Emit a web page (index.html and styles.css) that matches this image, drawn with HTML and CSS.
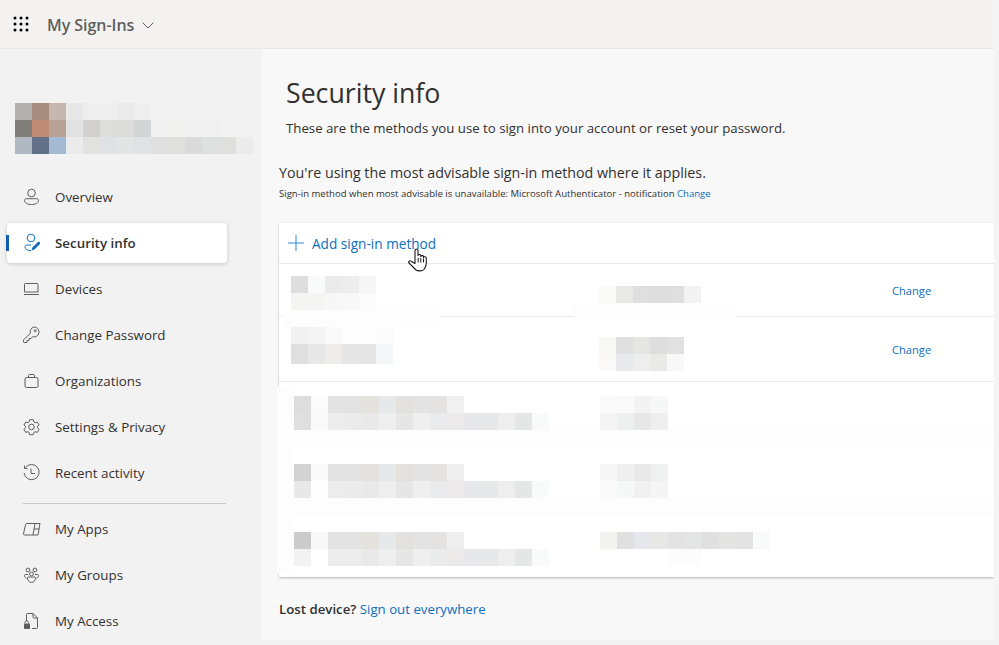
FILE: index.html
```html
<!DOCTYPE html>
<html lang="en">
<head>
<meta charset="utf-8">
<title>Security info</title>
<link rel="stylesheet" href="styles.css">
</head>
<body>
<div class="app">
  <header class="topbar">
    <svg class="waffle" width="16" height="16" viewBox="0 0 16 16"><g fill="#000"><circle cx="2" cy="2" r="1.500"/><circle cx="8" cy="2" r="1.500"/><circle cx="14" cy="2" r="1.500"/><circle cx="2" cy="8" r="1.500"/><circle cx="8" cy="8" r="1.500"/><circle cx="14" cy="8" r="1.500"/><circle cx="2" cy="14" r="1.500"/><circle cx="8" cy="14" r="1.500"/><circle cx="14" cy="14" r="1.500"/></g></svg>
    <span class="brand">My Sign-Ins</span>
    <svg class="chev" width="12" height="7" viewBox="0 0 12 7"><path d="M.5.5 6 6 11.500.5" fill="none" stroke="#605e5c"/></svg>
  </header>
  <div class="body">
    <nav class="side">
      <svg class="avatar" width="238" height="51" viewBox="0 0 238 51">
        <g id="a1">
          <rect x="0" y="0" width="17" height="17" fill="#b3b1ae"/><rect x="17" y="0" width="17" height="17" fill="#a58c7f"/><rect x="34" y="0" width="17" height="17" fill="#c6b7af"/><rect x="51" y="0" width="17" height="17" fill="#e8e8e8"/><rect x="68" y="0" width="17" height="17" fill="#eeeeee"/><rect x="85" y="0" width="17" height="17" fill="#efefef"/><rect x="102" y="0" width="17" height="17" fill="#ebebeb"/><rect x="119" y="0" width="17" height="17" fill="#eeeeee"/>
          <rect x="0" y="17" width="17" height="17" fill="#817d79"/><rect x="17" y="17" width="17" height="17" fill="#c18c75"/><rect x="34" y="17" width="17" height="17" fill="#b8a298"/><rect x="51" y="17" width="17" height="17" fill="#e2e2e2"/><rect x="68" y="17" width="17" height="17" fill="#d2d1cf"/><rect x="85" y="17" width="17" height="17" fill="#dddddc"/><rect x="102" y="17" width="17" height="17" fill="#dcdcda"/><rect x="119" y="17" width="17" height="17" fill="#d3d4d6"/><rect x="136" y="17" width="17" height="17" fill="#f1f1f1"/><rect x="153" y="17" width="17" height="17" fill="#f0f0ef"/><rect x="170" y="17" width="17" height="17" fill="#f1f1f1"/><rect x="187" y="17" width="17" height="17" fill="#f0f0f0"/>
          <rect x="0" y="34" width="17" height="17" fill="#b0b8c1"/><rect x="17" y="34" width="17" height="17" fill="#627188"/><rect x="34" y="34" width="17" height="17" fill="#a4b9d2"/><rect x="51" y="34" width="17" height="17" fill="#eaebea"/><rect x="68" y="34" width="17" height="17" fill="#e1e2e0"/><rect x="85" y="34" width="17" height="17" fill="#dfe1e4"/><rect x="102" y="34" width="17" height="17" fill="#e3e4e6"/><rect x="119" y="34" width="17" height="17" fill="#e0e2e5"/><rect x="136" y="34" width="17" height="17" fill="#dfdfdf"/><rect x="153" y="34" width="17" height="17" fill="#dfdfde"/><rect x="170" y="34" width="17" height="17" fill="#dadada"/><rect x="187" y="34" width="17" height="17" fill="#dfe1e0"/><rect x="204" y="34" width="17" height="17" fill="#dfdfdd"/><rect x="221" y="34" width="17" height="17" fill="#ebebeb"/>
        </g>
      </svg>
      <ul class="menu">
        <li class="item"><svg class="ico" width="20" height="20" viewBox="0 0 20 20"><g fill="none" stroke="#605e5c"><circle cx="10.500" cy="6" r="3.800"/><path d="M3.500 13.500c0-1 .8-1.800 1.800-1.800h10.400c1 0 1.800.8 1.800 1.800 0 2.600-3.300 4-7 4s-7-1.400-7-4Z"/></g></svg>Overview</li>
        <li class="item active"><svg class="ico" width="20" height="20" viewBox="0 0 20 20"><g fill="none" stroke="#0f6cbd"><circle cx="10" cy="5" r="3.800"/><path d="M10 17.500c-2.800 0-6-1-6-3.600 0-1 .8-1.900 1.800-1.900H10"/></g><path d="M10.500 17.500l.9-3 5.300-5.300c.6-.6 1.500-.5 2 0s.6 1.400 0 2l-5.300 5.300Z" fill="#0f6cbd"/></svg>Security info</li>
        <li class="item"><svg class="ico" width="20" height="20" viewBox="0 0 20 20"><g fill="none" stroke="#605e5c"><path d="M4.500 4.500h11.500a1 1 0 0 1 1 1v7.500H3.500V5.500a1 1 0 0 1 1-1Z"/><path d="M3 15.500h15"/></g></svg>Devices</li>
        <li class="item"><svg class="ico" width="20" height="20" viewBox="0 0 20 20"><g fill="none" stroke="#605e5c"><path d="M13 2c2.800 0 5 2.200 5 5s-2.200 5-5 5c-.6 0-1.100-.1-1.500-.3l-1.500 1.800H8v2H6v2H3.200a.7.7 0 0 1-.7-.7v-2l6.900-6.400A5 5 0 0 1 13 2Z"/><circle cx="14.200" cy="5.800" r="1"/></g></svg>Change Password</li>
        <li class="item"><svg class="ico" width="20" height="20" viewBox="0 0 20 20"><g fill="none" stroke="#605e5c"><rect x="4" y="6.500" width="13" height="10" rx="1.500"/><path d="M7.500 6.500V4.500a1 1 0 0 1 1-1h4a1 1 0 0 1 1 1v2"/></g></svg>Organizations</li>
        <li class="item"><svg class="ico" width="20" height="20" viewBox="0 0 20 20"><g fill="none" stroke="#605e5c"><circle cx="10.500" cy="10" r="2.800"/><path d="M8.700 2.700h3.600l.5 2.200 1.300.8 2.200-.7 1.800 3-1.700 1.500v1.400l1.700 1.500-1.800 3-2.200-.7-1.300.8-.5 2.200H8.700l-.5-2.200-1.300-.8-2.200.7-1.800-3 1.700-1.500v-1.400L2.900 8l1.800-3 2.200.7 1.300-.8Z" stroke-linejoin="round"/></g></svg>Settings &amp; Privacy</li>
        <li class="item"><svg class="ico" width="20" height="20" viewBox="0 0 20 20"><g fill="none" stroke="#605e5c"><path d="M4.500 4.500A7.600 7.600 0 1 1 3 10"/><path d="M3.500 2.500v3h3"/><path d="M10 5.500V10.500h4"/></g></svg>Recent activity</li>
      </ul>
      <hr class="rule">
      <ul class="menu">
        <li class="item"><svg class="ico" width="20" height="20" viewBox="0 0 20 20"><g fill="none" stroke="#605e5c"><path d="M6 4.500h13l-2 11.500H3.500a1 1 0 0 1-1-1.200L4.500 5.700A1.500 1.500 0 0 1 6 4.500Z"/><path d="M14 4.500 12 16M13.300 10h5"/></g></svg>My Apps</li>
        <li class="item"><svg class="ico" width="20" height="20" viewBox="0 0 20 20"><g fill="none" stroke="#605e5c"><circle cx="7" cy="5" r="1.900"/><circle cx="14" cy="5" r="1.900"/><circle cx="10.500" cy="9" r="1.900"/><path d="M6.500 13c0-.6.400-1 1-1h6c.6 0 1 .4 1 1 0 2.500-1.800 4.500-4 4.500s-4-2-4-4.500Z"/><path d="M7 9.500H4.500c-.6 0-1 .4-1 1 0 1.300.7 2.300 2 2.800M14 9.500h2.500c.6 0 1 .4 1 1 0 1.300-.7 2.300-2 2.800"/></g></svg>My Groups</li>
        <li class="item"><svg class="ico" width="20" height="20" viewBox="0 0 20 20"><g fill="none" stroke="#605e5c"><path d="M5.500 10V3.500a1 1 0 0 1 1-1h5.500l4.500 4.500v9.500a1 1 0 0 1-1 1H11"/><path d="M12 2.500V6a1 1 0 0 0 1 1h3.500"/><path d="M4 12.500v-1a1.700 1.700 0 0 1 3.400 0v1"/></g><rect x="3" y="12.500" width="6" height="5.500" rx=".7" fill="#605e5c"/></svg>My Access</li>
      </ul>
    </nav>
    <main class="main">
      <h1 class="title">Security info</h1>
      <p class="lead">These are the methods you use to sign into your account or reset your password.</p>
      <p class="advice">You're using the most advisable sign-in method where it applies.</p>
      <p class="note">Sign-in method when most advisable is unavailable: Microsoft Authenticator - notification <a class="link" href="#">Change</a></p>
      <section class="card">
        <div class="add">
          <svg class="plus" width="16" height="16" viewBox="0 0 16 16"><path d="M8 0v16M0 8h16" stroke="#2b88d8" fill="none"/></svg>
          <a class="link addlink" href="#">Add sign-in method</a>
          <svg class="hand" width="20" height="25" viewBox="0 0 20 25"><path d="M7 2.500c0-2 3-2 3 0V7.500c0-1.300 2.800-1.300 2.800 0v1c0-1.200 2.700-1.200 2.700 0v1c0-1.200 2.800-1 2.800.5v5c0 3.500-1.300 4.500-2.300 6.500-1 1.500-6 2-8 .5L1 15c-1.200-1.500.8-3 2.200-1.800L7 15.500Z" fill="#fff" stroke="#1a1a1a" stroke-width="1.100" stroke-linejoin="round"/><path d="M10.200 10v4.500M12.800 10v4.500M15.500 10.500v4" stroke="#1a1a1a"/></svg>
        </div>
        <div class="row row-a">
          <svg class="blur b-name" width="157" height="88" viewBox="0 0 157 88">
            <rect x="9" y="0" width="17" height="17" fill="#dedede"/><rect x="26" y="0" width="17" height="17" fill="#f9fafa"/><rect x="43" y="0" width="17" height="17" fill="#ebebeb"/><rect x="60" y="0" width="17" height="17" fill="#ededed"/><rect x="77" y="0" width="17" height="17" fill="#f6f6f6"/>
            <rect x="9" y="17" width="17" height="17" fill="#f4f4f3"/><rect x="26" y="17" width="17" height="17" fill="#f5f5f4"/><rect x="43" y="17" width="17" height="17" fill="#f7f7f7"/><rect x="60" y="17" width="17" height="17" fill="#f8f8f8"/><rect x="77" y="17" width="17" height="17" fill="#fbfbfb"/>
            <rect x="0" y="34" width="157" height="17" fill="#fdfdfd"/>
            <rect x="9" y="51" width="17" height="17" fill="#f1f1f1"/><rect x="26" y="51" width="17" height="17" fill="#f4f4f4"/><rect x="43" y="51" width="17" height="17" fill="#fafafa"/><rect x="60" y="51" width="17" height="17" fill="#fdfdfd"/><rect x="77" y="51" width="17" height="17" fill="#fdfdfd"/><rect x="94" y="51" width="17" height="17" fill="#fbfbfb"/>
            <rect x="9" y="68" width="17" height="20" fill="#dfdfdf"/><rect x="26" y="68" width="17" height="20" fill="#e8e8e8"/><rect x="43" y="68" width="17" height="20" fill="#eeedeb"/><rect x="60" y="68" width="17" height="20" fill="#e6e6e6"/><rect x="77" y="68" width="17" height="20" fill="#e5e5e5"/><rect x="94" y="68" width="17" height="20" fill="#f5f6f8"/>
          </svg>
          <svg class="blur b-val" width="164" height="34" viewBox="0 0 164 34">
            <rect x="26" y="0" width="17" height="17" fill="#f9f9f8"/><rect x="43" y="0" width="17" height="17" fill="#e9e9e8"/><rect x="60" y="0" width="17" height="17" fill="#dfdfdf"/><rect x="77" y="0" width="17" height="17" fill="#dedede"/><rect x="94" y="0" width="17" height="17" fill="#dfdfdf"/><rect x="111" y="0" width="17" height="17" fill="#f3f3f3"/>
            <rect x="0" y="17" width="164" height="17" fill="#fdfdfd"/>
          </svg>
          <a class="link change" href="#">Change</a>
        </div>
        <div class="row row-b">
          <svg class="blur b-val2" width="85" height="34" viewBox="0 0 85 34">
            <rect x="0" y="0" width="17" height="17" fill="#f8f8f7"/><rect x="17" y="0" width="17" height="17" fill="#e0e0e0"/><rect x="34" y="0" width="17" height="17" fill="#e5e5e4"/><rect x="51" y="0" width="17" height="17" fill="#dedede"/><rect x="68" y="0" width="17" height="17" fill="#e1e1e1"/>
            <rect x="0" y="17" width="17" height="17" fill="#faf9f8"/><rect x="17" y="17" width="17" height="17" fill="#e7e9ec"/><rect x="34" y="17" width="17" height="17" fill="#eeeeee"/><rect x="51" y="17" width="17" height="17" fill="#e9e9e7"/><rect x="68" y="17" width="17" height="17" fill="#f8f8f8"/>
          </svg>
          <a class="link change" href="#">Change</a>
        </div>
        <div class="rows-low">
          <div class="low">
            <svg class="blur" width="255" height="51" viewBox="0 0 255 51">
              <rect x="-17" y="-9" width="17" height="186" fill="#fdfdfd"/>
              <rect x="0" y="34" width="700" height="17" fill="#fdfdfd"/>
              <rect x="0" y="0" width="17" height="17" fill="#dddddd"/><rect x="17" y="0" width="17" height="17" fill="#fbfbfb"/><rect x="34" y="0" width="17" height="17" fill="#e3e3e3"/><rect x="51" y="0" width="17" height="17" fill="#e3e3e3"/><rect x="68" y="0" width="17" height="17" fill="#e3e2df"/><rect x="85" y="0" width="17" height="17" fill="#e7e8ea"/><rect x="102" y="0" width="17" height="17" fill="#e2e1de"/><rect x="119" y="0" width="17" height="17" fill="#e3e3e3"/><rect x="136" y="0" width="17" height="17" fill="#e4e3e1"/><rect x="153" y="0" width="17" height="17" fill="#f0f0f0"/>
              <rect x="0" y="17" width="17" height="17" fill="#dfdfdf"/><rect x="17" y="17" width="17" height="17" fill="#fafafa"/><rect x="34" y="17" width="17" height="17" fill="#ececec"/><rect x="51" y="17" width="17" height="17" fill="#ebebeb"/><rect x="68" y="17" width="17" height="17" fill="#e9e9e9"/><rect x="85" y="17" width="17" height="17" fill="#eeeeee"/><rect x="102" y="17" width="17" height="17" fill="#e6e6e6"/><rect x="119" y="17" width="17" height="17" fill="#efefef"/><rect x="136" y="17" width="17" height="17" fill="#e8eaec"/><rect x="153" y="17" width="17" height="17" fill="#ebeae8"/><rect x="170" y="17" width="17" height="17" fill="#e6e8eb"/><rect x="187" y="17" width="17" height="17" fill="#e7e8e9"/><rect x="204" y="17" width="17" height="17" fill="#eeeeee"/><rect x="221" y="17" width="17" height="17" fill="#e5e7e6"/><rect x="238" y="17" width="17" height="17" fill="#f9fbfb"/>
            </svg>
            <svg class="blur" width="68" height="34" viewBox="0 0 68 34">
              <rect x="0" y="0" width="17" height="17" fill="#fafafa"/><rect x="17" y="0" width="17" height="17" fill="#f9f9f9"/><rect x="34" y="0" width="17" height="17" fill="#f3f3f3"/><rect x="51" y="0" width="17" height="17" fill="#f6f8f8"/>
              <rect x="0" y="17" width="17" height="17" fill="#f5f5f5"/><rect x="17" y="17" width="17" height="17" fill="#eef0f0"/><rect x="34" y="17" width="17" height="17" fill="#e7e7e7"/><rect x="51" y="17" width="17" height="17" fill="#eeeeee"/>
            </svg>
          </div>
          <div class="low">
            <svg class="blur" width="255" height="51" viewBox="0 0 255 51">
              <rect x="0" y="34" width="700" height="17" fill="#fdfdfd"/>
              <rect x="0" y="0" width="17" height="17" fill="#d3d3d3"/><rect x="17" y="0" width="17" height="17" fill="#fafafa"/><rect x="34" y="0" width="17" height="17" fill="#e3e3e3"/><rect x="51" y="0" width="17" height="17" fill="#e3e3e3"/><rect x="68" y="0" width="17" height="17" fill="#e3e2df"/><rect x="85" y="0" width="17" height="17" fill="#e7e8ea"/><rect x="102" y="0" width="17" height="17" fill="#e2e1de"/><rect x="119" y="0" width="17" height="17" fill="#e3e3e3"/><rect x="136" y="0" width="17" height="17" fill="#e4e3e1"/><rect x="153" y="0" width="17" height="17" fill="#eeeeee"/>
              <rect x="0" y="17" width="17" height="17" fill="#e8e8e8"/><rect x="17" y="17" width="17" height="17" fill="#fefefe"/><rect x="34" y="17" width="17" height="17" fill="#ececec"/><rect x="51" y="17" width="17" height="17" fill="#ebebeb"/><rect x="68" y="17" width="17" height="17" fill="#e9e9e9"/><rect x="85" y="17" width="17" height="17" fill="#eeeeee"/><rect x="102" y="17" width="17" height="17" fill="#e6e6e6"/><rect x="119" y="17" width="17" height="17" fill="#efefef"/><rect x="136" y="17" width="17" height="17" fill="#e8eaec"/><rect x="153" y="17" width="17" height="17" fill="#ebeae8"/><rect x="170" y="17" width="17" height="17" fill="#e6e8eb"/><rect x="187" y="17" width="17" height="17" fill="#e7e8e9"/><rect x="204" y="17" width="17" height="17" fill="#eeeeee"/><rect x="221" y="17" width="17" height="17" fill="#e5e7e6"/><rect x="238" y="17" width="17" height="17" fill="#f9fbfb"/>
            </svg>
            <svg class="blur" width="68" height="34" viewBox="0 0 68 34">
              <rect x="0" y="0" width="17" height="17" fill="#f6f6f6"/><rect x="17" y="0" width="17" height="17" fill="#efefef"/><rect x="34" y="0" width="17" height="17" fill="#e9e9e9"/><rect x="51" y="0" width="17" height="17" fill="#eff1f1"/>
              <rect x="0" y="17" width="17" height="17" fill="#fafafa"/><rect x="17" y="17" width="17" height="17" fill="#f6f8f8"/><rect x="34" y="17" width="17" height="17" fill="#f1f1f1"/><rect x="51" y="17" width="17" height="17" fill="#f5f5f5"/>
            </svg>
          </div>
          <div class="low">
            <svg class="blur" width="255" height="34" viewBox="0 0 255 34">
              <rect x="0" y="0" width="17" height="17" fill="#cbcbcb"/><rect x="17" y="0" width="17" height="17" fill="#f8f8f8"/><rect x="34" y="0" width="17" height="17" fill="#e3e3e3"/><rect x="51" y="0" width="17" height="17" fill="#e3e3e3"/><rect x="68" y="0" width="17" height="17" fill="#e3e2df"/><rect x="85" y="0" width="17" height="17" fill="#e7e8ea"/><rect x="102" y="0" width="17" height="17" fill="#e2e1de"/><rect x="119" y="0" width="17" height="17" fill="#e3e3e3"/><rect x="136" y="0" width="17" height="17" fill="#e4e3e1"/><rect x="153" y="0" width="17" height="17" fill="#eeeeee"/>
              <rect x="0" y="17" width="17" height="17" fill="#f2f2f2"/><rect x="34" y="17" width="17" height="17" fill="#ececec"/><rect x="51" y="17" width="17" height="17" fill="#ececec"/><rect x="68" y="17" width="17" height="17" fill="#e9e9e9"/><rect x="85" y="17" width="17" height="17" fill="#eeeeee"/><rect x="102" y="17" width="17" height="17" fill="#e6e6e6"/><rect x="119" y="17" width="17" height="17" fill="#efefef"/><rect x="136" y="17" width="17" height="17" fill="#e9ecea"/><rect x="153" y="17" width="17" height="17" fill="#ebeae8"/><rect x="170" y="17" width="17" height="17" fill="#e6e8eb"/><rect x="187" y="17" width="17" height="17" fill="#e7e8e9"/><rect x="204" y="17" width="17" height="17" fill="#eeeeee"/><rect x="221" y="17" width="17" height="17" fill="#e5e7e6"/><rect x="238" y="17" width="17" height="17" fill="#f9fbfb"/>
            </svg>
            <svg class="blur" width="170" height="34" viewBox="0 0 170 34">
              <rect x="0" y="0" width="17" height="17" fill="#f3f3f2"/><rect x="17" y="0" width="17" height="17" fill="#e0e0e0"/><rect x="34" y="0" width="17" height="17" fill="#e6e7ea"/><rect x="51" y="0" width="17" height="17" fill="#e7e7e5"/><rect x="68" y="0" width="17" height="17" fill="#e3e3e3"/><rect x="85" y="0" width="17" height="17" fill="#e4e6e5"/><rect x="102" y="0" width="17" height="17" fill="#e0e0e0"/><rect x="119" y="0" width="17" height="17" fill="#e4e4e3"/><rect x="136" y="0" width="17" height="17" fill="#e3e3e3"/><rect x="153" y="0" width="17" height="17" fill="#f9fbfb"/>
              <rect x="68" y="17" width="34" height="17" fill="#fcfcfc"/>
            </svg>
          </div>
        </div>
      </section>
      <p class="lost"><strong class="lost-q">Lost device?</strong> <a class="link" href="#">Sign out everywhere</a></p>
    </main>
  </div>
</div>
</body>
</html>
```
FILE: styles.css
```css
* { box-sizing: border-box; }
html, body { margin: 0; padding: 0; }
body { font-family: "Open Sans", "Noto Sans", "Liberation Sans", sans-serif; color: #323130; background: #f2f2f2; overflow: hidden; }
.app { width: 999px; height: 640px; display: flex; flex-direction: column; overflow: hidden; border-right: 5px solid #f4f4f4; }
.topbar { height: 49px; flex: none; background: #f3f2f1; border-bottom: 1px solid #e8e8e8; display: flex; align-items: center; padding-left: 13px; }
.waffle { flex: none; margin-top: -1px; }
.brand { margin-left: 18px; font-size: 16px; font-weight: 600; color: #605e5c; letter-spacing: -.04px; padding-top: 1px; }
.chev { margin-left: 8px; margin-top: 3px; }
.body { flex: 1; display: flex; min-height: 0; }
.side { width: 262px; flex: none; background: #f2f2f2; padding: 54px 0 0 0; }
.avatar { display: block; margin-left: 15px; }
.menu { list-style: none; margin: 0; padding: 0 0 0 7px; }
.menu:first-of-type { margin-top: 23px; }
.item { width: 220px; height: 40px; margin-bottom: 6px; display: flex; align-items: center; padding-left: 14px; font-size: 13.350px; color: #323130; border-radius: 4px; position: relative; }
.ico { flex: none; margin-right: 14px; }
.active { background: #fff; font-weight: 600; box-shadow: 0 1px 4px rgba(0,0,0,.18); }
.active::before { content: ""; position: absolute; left: -1px; top: 12px; width: 3px; height: 16px; background: #0f5eb0; }
.rule { width: 203px; height: 1px; border: 0; background: #c8c8c8; margin: 10px 0 5px 23px; }
.main { flex: 1; background: #f8f8f8; padding: 23px 0 0 17px; min-width: 0; }
.title { margin: 0 0 0 7px; font-size: 26.700px; line-height: 42px; font-weight: 400; color: #323130; }
.lead { margin: 4px 0 0 7px; font-size: 13.240px; line-height: 20px; }
.advice { margin: 24px 0 0; font-size: 14.270px; line-height: 22px; }
.note { margin: 3px 0 0; font-size: 9.550px; line-height: 14px; }
.link { color: #106ebe; text-decoration: none; }
.card { margin-top: 22px; height: 354px; background: #fff; box-shadow: 0 1px 2px rgba(0,0,0,.28); position: relative; }
.add { height: 41px; display: flex; align-items: center; padding-left: 9px; border-bottom: 1px solid #e8e8e8; position: relative; }
.plus { flex: none; }
.addlink { margin-left: 8px; font-size: 13.620px; }
.hand { position: absolute; left: 129px; top: 25px; }
.row { display: flex; border-bottom: 1px solid #e8e8e8; position: relative; }
.blur { display: block; flex: none; overflow: visible; }
.row-a { height: 53px; padding-top: 12px; }
.row-b { height: 65px; padding: 20px 0 0 320px; }
.b-name { margin-left: 3px; }
.b-val { margin: 10px 0 0 134px; }
.b-val2 { flex: none; }
.change { font-size: 11.150px; position: absolute; left: 613px; top: 19px; }
.row-b .change { top: 25px; }
.rows-low { padding-left: 15px; }
.low { height: 68px; padding-top: 14px; display: grid; grid-template-columns: 306px 1fr; }
.lost { margin: 23px 0 0; font-size: 13.250px; line-height: 18px; }
.lost-q { font-weight: 600; }
```
